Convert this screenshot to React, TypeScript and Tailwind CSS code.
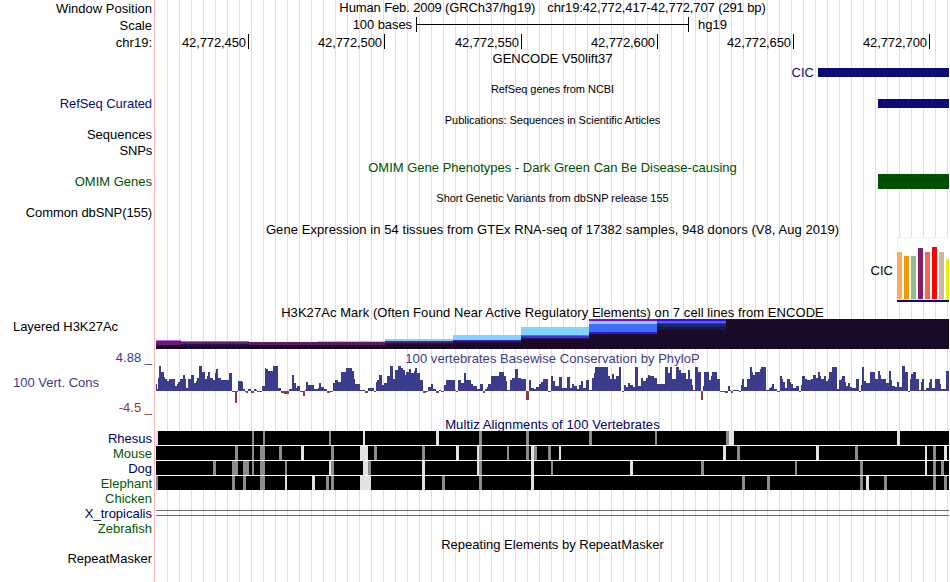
import type { ReactNode } from "react";

interface LabelProps {
  text: string;
  className?: string;
}

interface TitleProps {
  className?: string;
  children: ReactNode;
}

interface Rect {
  x: number;
  y: number;
  w: number;
  h: number;
  fill: string;
}

// x is the left edge of each step, a value of 0 leaves a gap
const conservation: [number, number][] = [
  [156, 7], [157, 2], [158, 13], [159, 25], [161, 19], [164, 14], [165, 12], [167, 10], [169, 12], [175, 5],
  [177, 7], [178, 9], [180, 12], [183, 16], [185, 12], [186, 3], [188, 12], [191, 16], [194, 8], [196, 10],
  [197, 13], [199, 25], [202, 19], [205, 12], [207, 15], [208, 19], [210, 13], [213, 11], [215, 18], [216, 22],
  [218, 13], [221, 11], [229, 18], [232, -1], [235, -12], [237, -1], [238, 10], [242, 9], [243, 2], [245, -1],
  [246, -2], [248, 2], [251, -2], [254, 2], [256, 1], [257, -1], [262, 5], [265, 23], [266, 22], [268, 20],
  [273, 25], [278, 3], [281, -2], [284, -3], [289, 2], [292, 16], [294, 8], [296, 3], [297, 5], [300, -1],
  [303, -5], [305, 1], [306, 9], [308, 6], [314, 2], [318, 3], [319, 8], [321, 4], [324, 2], [327, -2],
  [330, -1], [333, 8], [335, 11], [338, 9], [341, 19], [346, 23], [352, 20], [354, 12], [355, 7], [360, 1],
  [365, -2], [368, 3], [374, -1], [376, 9], [377, 11], [379, 16], [382, 6], [384, 8], [387, 15], [390, 25],
  [393, 12], [395, 21], [398, 25], [401, 23], [403, 21], [405, 16], [406, 19], [409, 22], [411, 18], [414, 20],
  [415, 23], [417, 18], [420, 11], [423, -2], [426, -1], [428, 4], [431, 7], [433, 2], [436, -2], [439, 1],
  [441, -1], [444, 6], [446, 11], [455, 1], [456, -1], [458, 11], [461, 8], [464, 18], [466, 11], [471, 7],
  [473, 5], [477, 2], [480, 7], [483, -2], [485, 2], [487, 4], [488, 7], [491, 15], [499, 19], [504, 15],
  [506, 10], [507, 1], [510, 11], [512, 13], [515, 22], [518, 13], [521, 12], [526, -9], [529, 11], [531, 3],
  [534, 2], [536, 4], [539, 7], [541, 9], [543, 12], [548, -1], [551, 15], [553, 10], [555, 5], [559, 14],
  [562, 3], [567, 14], [570, 3], [572, 7], [574, 5], [577, 2], [579, 6], [581, 10], [583, 3], [586, 11],
  [589, 1], [592, 13], [594, 18], [595, 24], [608, 15], [610, 12], [612, 17], [614, 12], [616, 15], [619, 24],
  [621, 0], [622, -1], [624, 6], [626, 4], [628, 8], [630, 6], [633, 4], [635, 24], [638, 5], [641, 13],
  [643, 10], [646, 13], [648, 16], [650, 15], [654, 13], [657, 7], [665, 24], [668, 18], [670, 24], [672, 12],
  [676, 24], [679, 21], [681, 18], [686, 12], [688, 21], [690, 12], [692, 6], [693, 1], [695, 24], [698, 19],
  [701, -9], [703, 5], [704, 19], [709, 11], [711, 15], [712, 19], [717, 12], [720, -1], [725, -2], [728, 5],
  [730, 1], [731, -2], [733, 1], [739, -1], [741, 6], [742, 12], [744, 4], [747, 12], [750, 24], [752, 19],
  [753, 16], [755, 19], [760, 22], [761, 24], [766, 1], [769, 3], [771, 4], [772, 7], [774, 2], [777, -1],
  [780, 15], [782, 12], [783, 9], [785, 3], [787, 12], [790, 9], [791, 7], [793, 3], [796, 5], [799, -1],
  [801, 6], [802, 15], [805, 12], [807, 11], [811, 12], [813, 16], [816, 13], [818, 19], [820, 15], [821, 12],
  [824, 15], [826, 10], [828, 12], [829, 19], [832, 24], [837, 2], [839, 11], [841, 12], [842, 15], [845, 9],
  [846, 5], [848, 8], [850, 4], [852, 3], [856, 12], [859, -1], [861, 6], [862, 24], [864, 10], [866, 8],
  [870, 19], [875, 12], [878, 20], [880, 16], [881, 12], [886, 8], [889, 20], [891, 11], [892, 5], [895, 4],
  [897, 9], [899, 4], [902, 25], [905, 19], [908, -1], [910, 12], [911, 17], [913, 19], [916, 12], [919, 1],
  [921, 9], [922, 12], [924, 1], [926, 3], [929, 9], [930, 12], [932, 3], [935, 12], [940, 7], [941, 2],
  [946, 20], [949, 0],
];

// each layer is [y, height, colour], the rest of the step is filled dark
const h3k27ac: { x: number; w: number; layers: [number, number, string][] }[] = [
  { x: 156, w: 25, layers: [[340, 1, "#c264ff"], [341, 4, "#6c1a6c"], [345, 1, "#1a1048"]] },
  { x: 181, w: 68, layers: [[341, 1, "#b25ce6"], [342, 2, "#6c1a6c"], [344, 2, "#191058"]] },
  { x: 249, w: 68, layers: [[342, 3, "#5e1760"], [345, 1, "#191050"]] },
  { x: 317, w: 68, layers: [[341, 1, "#80d4ff"], [342, 3, "#5e1760"], [345, 1, "#2a0a60"]] },
  { x: 385, w: 68, layers: [[339, 2, "#80d4ff"], [341, 1, "#3a2ca0"], [342, 1, "#60186a"], [343, 1, "#300a3c"]] },
  { x: 453, w: 68, layers: [[335, 5, "#80d4ff"], [340, 1, "#3020c0"], [341, 1, "#40186a"], [342, 2, "#2c0832"]] },
  { x: 521, w: 68, layers: [[327, 8, "#80d4ff"], [335, 1, "#406cff"], [336, 2, "#3a34d8"], [338, 1, "#2a1060"], [339, 1, "#2c0832"]] },
  { x: 589, w: 68, layers: [[319, 2, "#8000ff"], [321, 3, "#80d4ff"], [324, 8, "#406cff"], [332, 2, "#3418c0"]] },
  { x: 657, w: 69, layers: [[319, 2, "#4000ff"], [321, 2, "#406cff"], [323, 1, "#4020ff"], [324, 3, "#1a2466"], [327, 3, "#1a1452"]] },
  { x: 726, w: 68, layers: [[319, 1, "#1a1048"]] },
  { x: 794, w: 155, layers: [[319, 1, "#1a0a28"]] },
];

const LIGHT = "#e2e2e2";
const GREY = "#8c8c8c";

// [x, width, colour]
const alignments: { name: string; y: number; gaps: [number, number, string][] }[] = [
  {
    name: "Rhesus",
    y: 431,
    gaps: [
      [156, 2, LIGHT], [252, 2, GREY], [263, 2, GREY], [329, 2, GREY], [363, 2, LIGHT], [436, 3, LIGHT],
      [479, 3, GREY], [526, 3, GREY], [589, 3, GREY], [655, 2, GREY], [726, 3, GREY], [729, 5, LIGHT], [897, 3, LIGHT],
    ],
  },
  {
    name: "Mouse",
    y: 446,
    gaps: [
      [235, 3, GREY], [252, 2, GREY], [260, 5, GREY], [279, 3, GREY], [301, 3, LIGHT], [331, 3, GREY],
      [360, 8, LIGHT], [374, 3, GREY], [422, 3, GREY], [456, 3, LIGHT], [477, 2, LIGHT], [479, 3, GREY],
      [507, 2, GREY], [526, 3, GREY], [531, 3, LIGHT], [534, 3, GREY], [548, 3, GREY], [559, 2, LIGHT],
      [723, 3, LIGHT], [737, 3, GREY], [816, 3, LIGHT], [855, 3, GREY], [925, 2, LIGHT], [933, 3, GREY], [944, 3, LIGHT],
    ],
  },
  {
    name: "Dog",
    y: 461,
    gaps: [
      [213, 3, GREY], [232, 6, GREY], [243, 6, GREY], [252, 2, GREY], [260, 5, GREY], [285, 2, GREY],
      [329, 2, LIGHT], [331, 3, GREY], [363, 5, LIGHT], [368, 3, GREY], [422, 3, LIGHT], [477, 2, LIGHT],
      [479, 3, GREY], [531, 3, LIGHT], [551, 2, GREY], [630, 3, LIGHT], [701, 3, GREY], [795, 2, GREY],
      [860, 3, GREY], [925, 2, LIGHT], [933, 3, GREY], [941, 3, GREY],
    ],
  },
  {
    name: "Elephant",
    y: 476,
    gaps: [
      [156, 2, GREY], [232, 3, GREY], [243, 3, GREY], [260, 5, GREY], [285, 2, LIGHT], [312, 3, LIGHT],
      [326, 3, GREY], [331, 3, GREY], [360, 11, LIGHT], [422, 3, LIGHT], [442, 3, GREY], [479, 3, GREY],
      [531, 3, LIGHT], [742, 3, GREY], [767, 3, GREY], [860, 3, GREY], [866, 3, LIGHT], [884, 3, GREY],
      [933, 3, GREY], [944, 3, GREY],
    ],
  },
];

const gtexBars: Rect[] = [
  { x: 0, y: 252, w: 5, h: 47, fill: "#ffaa5c" },
  { x: 7, y: 256, w: 5, h: 43, fill: "#ee9a00" },
  { x: 14, y: 256, w: 5, h: 43, fill: "#8fbc8f" },
  { x: 21, y: 248, w: 5, h: 51, fill: "#8b1c62" },
  { x: 28, y: 252, w: 5, h: 47, fill: "#ee6a50" },
  { x: 35, y: 247, w: 5, h: 52, fill: "#ff0000" },
  { x: 42, y: 252, w: 5, h: 47, fill: "#cdb79e" },
  { x: 49, y: 259, w: 3, h: 40, fill: "#eeee00" },
];

function Label({ text, className = "pr-0.5" }: LabelProps) {
  return <p className={`h-[15px] shrink-0 text-right leading-[15px] ${className}`}>{text}</p>;
}

function Title({ className = "", children }: TitleProps) {
  return <h2 className={`h-[15px] shrink-0 text-center leading-[15px] ${className}`}>{children}</h2>;
}

function RulerMark({ position, className }: { position: string; className: string }) {
  return (
    <div className={`shrink-0 border-r border-black pr-0.5 text-right leading-[17px] tracking-[-0.1px] ${className}`}>
      {position}
    </div>
  );
}

function Labels() {
  return (
    <aside className="flex w-[154px] shrink-0 flex-col pt-px">
      <Label text="Window Position" />
      <Label text="Scale" className="mt-0.5 pr-0.5" />
      <Label text="chr19:" className="mt-0.5 pr-0.5" />
      <Label text="RefSeq Curated" className="mt-[46px] pr-0.5 tracking-[-0.07px] text-[#0c0c78]" />
      <Label text="Sequences" className="mt-4 pr-0.5" />
      <Label text="SNPs" className="mt-px pr-0.5 tracking-[-0.2px]" />
      <Label text="OMIM Genes" className="mt-4 pr-0.5 text-[#005000]" />
      <Label text="Common dbSNP(155)" className="mt-4 pr-0.5 tracking-[-0.1px]" />
      <Label text="Layered H3K27Ac" className="mt-[99px] pr-9 tracking-[-0.03px]" />
      <Label text="4.88 _" className="mt-4 pr-0.5 text-[#3c3c8c]" />
      <Label text="100 Vert. Cons" className="mt-2.5 pr-[55px] text-[#3c3c8c]" />
      <Label text="-4.5 _" className="mt-2.5 pr-0.5 text-[#8c3c3c]" />
      <Label text="Rhesus" className="mt-4 pr-0.5 text-[#000064]" />
      <Label text="Mouse" className="pr-0.5 text-[#005a00]" />
      <Label text="Dog" className="pr-0.5 text-[#000064]" />
      <Label text="Elephant" className="pr-0.5 text-[#005a00]" />
      <Label text="Chicken" className="pr-0.5 text-[#005a00]" />
      <Label text="X_tropicalis" className="pr-0.5 text-[#000064]" />
      <Label text="Zebrafish" className="pr-0.5 text-[#005a00]" />
      <Label text="RepeatMasker" className="mt-[15px] pr-0.5" />
    </aside>
  );
}

function Histone() {
  return (
    <svg className="-mt-px block h-[30px] w-full shrink-0" viewBox="156 319 793 30" shapeRendering="crispEdges">
      {h3k27ac.map(({ x, w, layers }) => (
        <g key={x}>
          <rect x={x} y={layers[0][0]} width={w} height={349 - layers[0][0]} fill="#1a0a28" />
          {layers.map(([y, h, fill]) => (
            <rect key={y} x={x} y={y} width={w} height={h} fill={fill} />
          ))}
        </g>
      ))}
    </svg>
  );
}

function PhyloP() {
  return (
    <svg className="block h-[38px] w-full shrink-0" viewBox="156 366 793 38" shapeRendering="crispEdges">
      {conservation.slice(0, -1).map(([x, value], i) => (
        <rect
          key={x}
          x={x}
          y={value > 0 ? 391 - value : 391}
          width={conservation[i + 1][0] - x}
          height={Math.abs(value)}
          fill={value > 0 ? "#3c3c8c" : "#8c3c3c"}
        />
      ))}
    </svg>
  );
}

function Multiz() {
  return (
    <svg className="-mt-px block h-[85px] w-full shrink-0" viewBox="156 431 793 85" shapeRendering="crispEdges">
      <rect x={156} y={431} width={793} height={59} fill="#fff" />
      {alignments.map(({ name, y, gaps }) => (
        <g key={name}>
          <rect x={156} y={y} width={793} height={14} fill="#000" />
          {gaps.map(([x, w, fill]) => (
            <rect key={x} x={x} y={y} width={w} height={14} fill={fill} />
          ))}
        </g>
      ))}
      <rect x={156} y={510} width={793} height={1} fill="#6e6e6e" />
      <rect x={156} y={515} width={793} height={1} fill="#6e6e6e" />
    </svg>
  );
}

function Tracks() {
  return (
    <main className="ml-px flex w-[793px] shrink-0 flex-col bg-[linear-gradient(to_right,#dcdcff_1px,transparent_1px)] bg-[length:12px_100%] bg-[position:11px_0]">
      <Title className="tracking-[-0.12px]">
        Human Feb. 2009 (GRCh37/hg19)
        <span className="ml-3">chr19:42,772,417-42,772,707 (291 bp)</span>
      </Title>

      <div className="mt-0.5 flex h-[15px] shrink-0 leading-[15px]">
        <span className="w-[260px] pr-1 text-right tracking-[-0.08px]">100 bases</span>
        <div className="flex w-[273px] items-center border-x border-black">
          <div className="h-px w-full bg-black" />
        </div>
        <span className="ml-[9px]">hg19</span>
      </div>

      <div className="mt-0.5 flex h-[15px] shrink-0">
        <RulerMark position="42,772,450" className="w-[93px]" />
        <RulerMark position="42,772,500" className="w-[136px]" />
        <RulerMark position="42,772,550" className="w-[137px]" />
        <RulerMark position="42,772,600" className="w-[136px]" />
        <RulerMark position="42,772,650" className="w-[136px]" />
        <RulerMark position="42,772,700" className="w-[136px]" />
      </div>

      <Title className="mt-0.5">GENCODE V50lift37</Title>
      <div className="flex h-[13px] shrink-0 items-center justify-end leading-[13px] text-[#0c0c78]">
        <span>CIC</span>
        <div className="ml-1 h-[9px] w-[131px] bg-[#0c0c78]" />
      </div>

      <Title className="mt-[3px] text-[11px] tracking-[-0.04px]">RefSeq genes from NCBI</Title>
      <div className="mt-0.5 flex h-[9px] shrink-0 justify-end">
        <div className="w-[71px] bg-[#0c0c78]" />
      </div>

      <Title className="mt-[5px] text-[11px] tracking-[-0.05px]">Publications: Sequences in Scientific Articles</Title>

      <Title className="mt-8 text-[#005000]">OMIM Gene Phenotypes - Dark Green Can Be Disease-causing</Title>
      <div className="-mt-px flex h-[15px] shrink-0 justify-end">
        <div className="w-[71px] bg-[#005000]" />
      </div>

      <Title className="mt-0.5 text-[11px] tracking-[-0.02px]">Short Genetic Variants from dbSNP release 155</Title>

      <Title className="mt-4 tracking-[0.065px]">
        Gene Expression in 54 tissues from GTEx RNA-seq of 17382 samples, 948 donors (V8, Aug 2019)
      </Title>
      <div className="flex h-[65px] shrink-0 items-center justify-end">
        <span className="mt-0.5 mr-1 leading-[15px]">CIC</span>
        <svg className="block h-[65px] w-[52px]" viewBox="0 237 52 65" shapeRendering="crispEdges">
          <rect x={0} y={237} width={52} height={65} fill="#f0f0f0" />
          <rect x={1} y={238} width={51} height={61} fill="#fff" />
          {gtexBars.map((bar) => (
            <rect key={bar.x} x={bar.x} y={bar.y} width={bar.w} height={bar.h} fill={bar.fill} />
          ))}
          <rect x={0} y={299} width={52} height={1} fill="#dcdcdc" />
          <rect x={0} y={300} width={52} height={2} fill="#0c0c78" />
        </svg>
      </div>

      <Title className="mt-[3px] tracking-[0.06px]">
        H3K27Ac Mark (Often Found Near Active Regulatory Elements) on 7 cell lines from ENCODE
      </Title>
      <Histone />

      <Title className="mt-0.5 tracking-[0.05px] text-[#3c3c8c]">100 vertebrates Basewise Conservation by PhyloP</Title>
      <PhyloP />

      <Title className="mt-[13px] tracking-[0.1px] text-[#000064]">Multiz Alignments of 100 Vertebrates</Title>
      <Multiz />

      <Title className="mt-[21px]">Repeating Elements by RepeatMasker</Title>
    </main>
  );
}

export default function App() {
  return (
    <div className="flex h-[582px] w-[950px] overflow-hidden bg-white font-['Liberation_Sans',Arial,sans-serif] text-[13px] whitespace-nowrap text-black">
      <Labels />
      <div className="w-px shrink-0 bg-[#ffb4b4]" />
      <Tracks />
    </div>
  );
}
